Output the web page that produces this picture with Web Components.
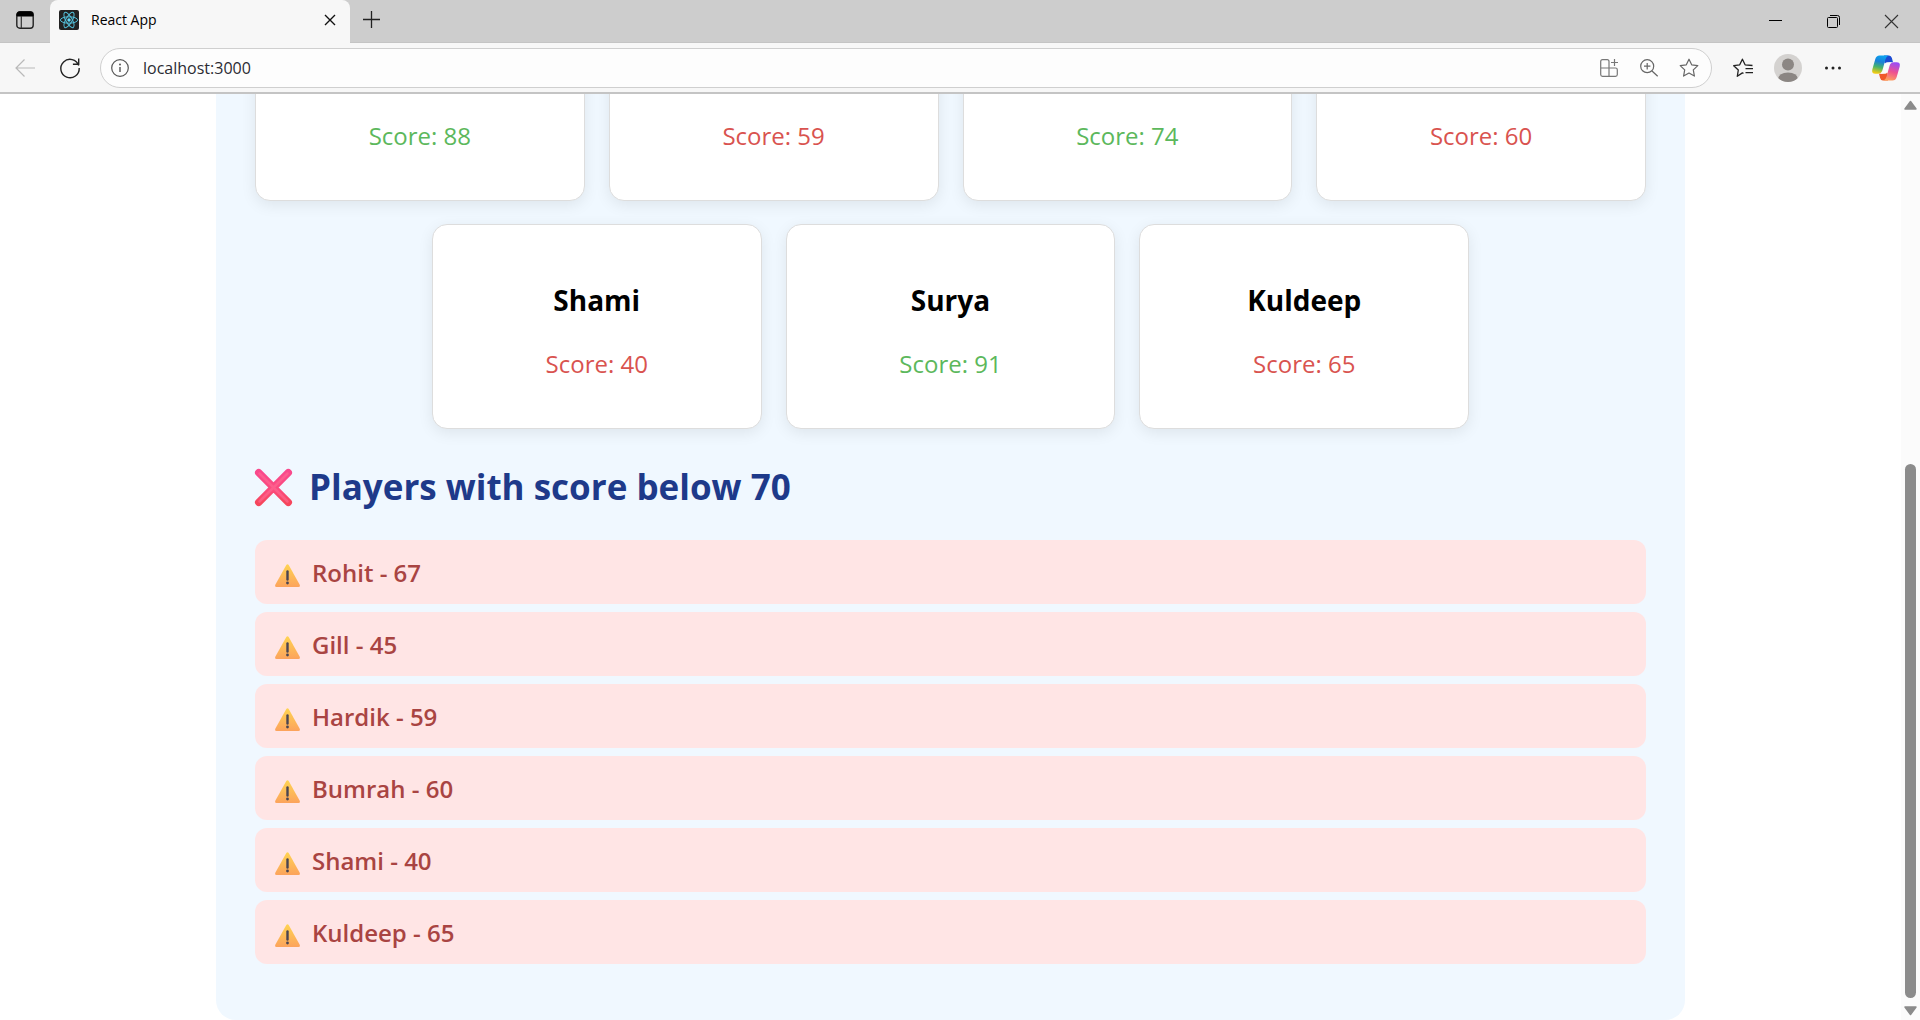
<!DOCTYPE html>
<html lang="en">
<head>
<meta charset="utf-8">
<title>React App</title>
<style>
  html, body { height: 100%; margin: 0; }
  body { overflow: hidden; background: #fff; font-family: "Open Sans", "Noto Sans", sans-serif; color: #000; }
</style>
</head>
<body>
<browser-window>
  <tab-strip slot="chrome" label="React App"></tab-strip>
  <nav-bar slot="chrome" address="localhost:3000"></nav-bar>
  <score-panel>
    <player-card score="88"></player-card>
    <player-card score="59"></player-card>
    <player-card score="74"></player-card>
    <player-card score="60"></player-card>
    <player-card score="40">Shami</player-card>
    <player-card score="91">Surya</player-card>
    <player-card score="65">Kuldeep</player-card>
    <section-title slot="below">Players with score below 70</section-title>
    <low-score slot="below">Rohit - 67</low-score>
    <low-score slot="below">Gill - 45</low-score>
    <low-score slot="below">Hardik - 59</low-score>
    <low-score slot="below">Bumrah - 60</low-score>
    <low-score slot="below">Shami - 40</low-score>
    <low-score slot="below">Kuldeep - 65</low-score>
  </score-panel>
  <scroll-track slot="scroll"></scroll-track>
</browser-window>

<script>
const base = `<style>
  *, *::before, *::after { box-sizing: border-box; }
  button { display: flex; align-items: center; justify-content: center; flex: none; margin: 0; padding: 0; border: 0; background: none; font: inherit; color: inherit; }
  svg { display: block; flex: none; overflow: visible; fill: none; }
</style>`;

function define(name, render) {
  customElements.define(name, class extends HTMLElement {
    constructor() { super(); this.attachShadow({ mode: "open" }); }
    connectedCallback() { this.shadowRoot.innerHTML = base + render(this); }
  });
}

define("browser-window", () => `<style>
  :host { display: flex; flex-direction: column; height: 100vh; }
  header { flex: none; border-bottom: 2px solid #c4c4c4; }
  .view { flex: 1; min-height: 0; display: flex; }
  main { flex: 1; min-width: 0; display: flex; flex-direction: column; justify-content: flex-end; align-items: center; overflow: hidden; }
</style>
<header><slot name="chrome"></slot></header>
<div class="view"><main><slot></slot></main><slot name="scroll"></slot></div>`);

define("tab-strip", el => `<style>
  :host { display: flex; height: 43px; background: #cdcdcd; box-shadow: inset 0 -1px #c4c4c4; }
  .menu { width: 50px; height: 40px; }
  .tab { display: flex; align-items: center; width: 300px; height: 43px; padding: 0 10px 3px 9px; background: #f7f7f7; border-radius: 8px 8px 0 0; }
  .name { flex: 1; padding-left: 12px; font-size: 14px; line-height: 20px; }
  .close { width: 20px; height: 20px; }
  .add { width: 43px; height: 39px; }
  .win { display: flex; margin-left: auto; }
  .win button { width: 58px; height: 42px; }
</style>
<button class="menu" aria-label="Tab actions"><svg width="18" height="18" viewBox="0 0 18 18"><rect x=".8" y=".8" width="16.4" height="16.4" rx="3" stroke="#222" stroke-width="1.4"/><path d="M1 5V3.5Q1 1 3.5 1h11Q17 1 17 3.5V5Z" fill="#000" stroke="#000"/><path d="M5.3 5v12" stroke="#333" stroke-width="1.2"/></svg></button>
<div class="tab">
  <svg width="20" height="20" viewBox="0 0 20 20"><rect width="20" height="20" rx="2" fill="#222"/><g stroke="#53bfd9" stroke-width="1"><ellipse cx="10" cy="10" rx="8.6" ry="3.2"/><ellipse cx="10" cy="10" rx="8.6" ry="3.2" transform="rotate(60 10 10)"/><ellipse cx="10" cy="10" rx="8.6" ry="3.2" transform="rotate(120 10 10)"/></g><circle cx="10" cy="10" r="1.7" fill="#61dafb"/></svg>
  <span class="name">${el.getAttribute("label")}</span>
  <button class="close" aria-label="Close tab"><svg width="10" height="10" viewBox="0 0 10 10"><path d="M0 0l10 10M10 0L0 10" stroke="#111" stroke-width="1.4"/></svg></button>
</div>
<button class="add" aria-label="New tab"><svg width="17" height="17" viewBox="0 0 17 17"><path d="M8.5 0v17M0 8.5h17" stroke="#222" stroke-width="1.3"/></svg></button>
<div class="win">
  <button aria-label="Minimize"><svg width="13" height="13" viewBox="0 0 13 13"><path d="M0 5.5h13" stroke="#000"/></svg></button>
  <button aria-label="Restore"><svg width="13" height="13" viewBox="0 0 13 13"><rect x=".5" y="2.5" width="10" height="10" rx="1" stroke="#000"/><path d="M3 .5h7.5q2 0 2 2V10" stroke="#000"/></svg></button>
  <button aria-label="Close window"><svg width="13" height="13" viewBox="0 0 13 13"><path d="M0 0l13 13M13 0L0 13" stroke="#333" stroke-width="1.1"/></svg></button>
</div>`);

const star = "M10 1.2l2.7 5.6 6.1.8-4.5 4.3 1.1 6.2-5.4-3-5.4 3 1.1-6.2L1.2 7.6l6.1-.8Z";

define("nav-bar", el => `<style>
  :host { display: flex; align-items: center; height: 49px; padding: 0 4px 0 2px; background: #f7f7f7; }
  .nav { width: 45px; height: 40px; }
  .box { flex: 1; min-width: 0; display: flex; align-items: center; height: 40px; margin: 0 8px; padding: 0 2px 0 10px; border: 1px solid #cfcfcf; border-radius: 20px; background: #fdfdfd; }
  .box button { width: 40px; height: 36px; }
  .box .info { width: 18px; }
  input { flex: 1; min-width: 0; margin: 0 0 0 14px; padding: 0; border: 0; outline: 0; background: none; font: 16px/24px "Open Sans", "Noto Sans", sans-serif; color: #2b2b33; }
  .pilot { width: 61px; height: 40px; }
</style>
<button class="nav" aria-label="Back"><svg width="20" height="18" viewBox="0 0 20 18"><path d="M20 9H1M9.5 .5L1 9l8.500 8.500" stroke="#b9b9b9" stroke-width="1.200"/></svg></button>
<button class="nav" aria-label="Refresh"><svg width="20" height="20" viewBox="0 0 20 20"><path d="M18.700 7.500A9.200 9.200 0 1 0 19.200 10M18.700 .5v5.800h-5.800" stroke="#222" stroke-width="1.400"/></svg></button>
<div class="box">
  <button class="info" aria-label="Site information"><svg width="18" height="18" viewBox="0 0 18 18"><circle cx="9" cy="9" r="8.300" stroke="#555" stroke-width="1.200"/><path d="M9 8v5" stroke="#444" stroke-width="1.300"/><circle cx="9" cy="5.500" r=".9" fill="#444"/></svg></button>
  <input type="text" aria-label="Address" value="${el.getAttribute("address")}">
  <button aria-label="Apps"><svg width="18" height="18" viewBox="0 0 18 18"><path d="M9 9V2.500Q9 .7 7.200 .7H2.500Q.7 .7 .7 2.500V15.500Q.7 17.300 2.500 17.300H15.500Q17.300 17.300 17.300 15.500V10.800Q17.300 9 15.500 9H.7M9 9v8.300M14.500 0v7M11 3.500h7" stroke="#777" stroke-width="1.200"/></svg></button>
  <button aria-label="Zoom"><svg width="18" height="18" viewBox="0 0 18 18"><circle cx="7.200" cy="7.200" r="6.500" stroke="#666" stroke-width="1.200"/><path d="M12 12l5.700 5.200M7.200 4v6.400M4 7.200h6.400" stroke="#666" stroke-width="1.200"/></svg></button>
  <button aria-label="Add to favorites"><svg width="20" height="20" viewBox="0 0 20 20"><path d="${star}" stroke="#666" stroke-width="1.200" stroke-linejoin="round"/></svg></button>
</div>
<button class="nav" aria-label="Favorites"><svg width="20" height="20" viewBox="0 0 20 20"><path d="M10.500 15.300L9.400 14.900 4.300 18.300 5.300 12 .7 7.700l6-.9L9.400 1.200l2.700 5.600 7.400.7M12.500 10.600h7.500M12.500 14.700h7.500" stroke="#222" stroke-width="1.300" stroke-linejoin="round"/></svg></button>
<button class="nav" aria-label="Profile"><svg width="28" height="28" viewBox="0 0 28 28"><defs><clipPath id="disc"><circle cx="14" cy="14" r="14"/></clipPath></defs><circle cx="14" cy="14" r="14" fill="#d4d2d0"/><g fill="#8b8683" clip-path="url(#disc)"><circle cx="14" cy="10.500" r="6"/><path d="M4 25q1-6.500 10-6.500T24 25l-4 3H8Z"/></g></svg></button>
<button class="nav" aria-label="Settings and more"><svg width="16" height="4" viewBox="0 0 16 4"><g fill="#222"><circle cx="1.500" cy="2" r="1.500"/><circle cx="8" cy="2" r="1.500"/><circle cx="14.500" cy="2" r="1.500"/></g></svg></button>
<button class="pilot" aria-label="Copilot"><svg width="28" height="26" viewBox="0 0 28 26">
  <defs>
    <linearGradient id="a" x1=".6" y1="0" x2=".4" y2="1"><stop offset="0" stop-color="#0aa5f0"/><stop offset=".35" stop-color="#1b80d8"/><stop offset=".65" stop-color="#45b36b"/><stop offset="1" stop-color="#f4cc12"/></linearGradient>
    <linearGradient id="b" x1=".6" y1="0" x2=".3" y2="1"><stop offset="0" stop-color="#9b4df5"/><stop offset=".5" stop-color="#ee5191"/><stop offset="1" stop-color="#ffa45c"/></linearGradient>
  </defs>
  <path d="M12 .5h5q2.200 0 2.900 2.500L21 7.300h-2.500q-2.500 0-3.500 1.700l-2.500-1Z" fill="#1c4bd2"/>
  <path d="M16 25.500h-5q-2.200 0-2.900-2.500L7 18.700h2.500q2.500 0 3.500-1.700l2.500 1Z" fill="#f0592b"/>
  <path d="M7.500 .5H16.500q-2.300 1-3.100 4L10.500 15q-1 3.700-4.500 3.700H3.500Q-.7 18.700.3 14.500L3.300 4Q4.300.5 7.500.5Z" fill="url(#a)"/>
  <path d="M20.500 25.500H11.500q2.300-1 3.100-4L17.500 11q1-3.700 4.500-3.700h2.500q4.200 0 3.200 4.200l-3 10.500q-1 3.500-4.200 3.500Z" fill="url(#b)"/>
  <path d="M13 8.800q.4-1.500 2-1.500h4.500q-2 .8-2.700 3.200L15 17.200q-.4 1.500-2 1.500H8.500q2-.8 2.700-3.200Z" fill="#fbfbfb"/>
</svg></button>`);

define("scroll-track", () => `<style>
  :host { flex: none; display: flex; flex-direction: column; align-items: center; width: 19px; padding: 6px 0 4px; background: #fbfbfb; }
  .rail { flex: 1; display: flex; flex-direction: column; width: 11px; padding-bottom: 8px; }
  .before { flex: 354; }
  .thumb { flex: 534; border-radius: 6px; background: #8b8b8b; }
</style>
<svg width="13" height="10" viewBox="0 0 13 10"><path d="M6.500 1.500L12 9H1Z" fill="#8b8b8b" stroke="#8b8b8b" stroke-width="1.500" stroke-linejoin="round"/></svg>
<div class="rail"><div class="before"></div><div class="thumb"></div></div>
<svg width="13" height="10" viewBox="0 0 13 10"><path d="M6.500 8.500L12 1H1Z" fill="#8b8b8b" stroke="#8b8b8b" stroke-width="1.500" stroke-linejoin="round"/></svg>`);

define("score-panel", () => `<style>
  :host { display: block; box-sizing: border-box; flex: none; width: calc(100% - 432px); padding: 39px 39px 56px; border-radius: 20px; background: #f0f8ff; }
  .cards { display: flex; flex-wrap: wrap; justify-content: center; gap: 23px 24px; }
  .below { display: flex; flex-direction: column; gap: 8px; }
</style>
<div class="cards"><slot></slot></div>
<div class="below"><slot name="below"></slot></div>`);

define("player-card", el => {
  const score = Number(el.getAttribute("score"));
  return `<style>
  :host { box-sizing: border-box; display: flex; flex-direction: column; justify-content: flex-end; flex: none; width: calc((100% - 72px) / 4); min-height: 205px; padding: 48px 24px; border: 1px solid #ddd; border-radius: 15px; background: #fff; box-shadow: 0 4px 15px rgba(0, 0, 0, .08); text-align: center; }
  h3 { margin: 0 0 30px; font-size: 28px; line-height: 36px; font-weight: 700; }
  p { margin: 0; font-size: 24px; line-height: 32px; color: ${score > 70 ? "#5cb85c" : "#d9534f"}; }
</style>
${el.textContent ? "<h3><slot></slot></h3>" : ""}<p>Score: ${score}</p>`;
});

define("section-title", () => `<style>
  :host { display: block; padding: 34px 0 21px; }
  h2 { display: flex; align-items: center; gap: 17px; margin: 0; font-size: 35px; line-height: 48px; font-weight: 700; color: #1e3a8a; }
</style>
<h2><svg width="37" height="37" viewBox="0 0 37 37"><defs><linearGradient id="x" x1="0" y1="0" x2="0" y2="1"><stop offset="0" stop-color="#f9498c"/><stop offset=".6" stop-color="#fb4a7c"/><stop offset="1" stop-color="#f6465c"/></linearGradient></defs><path d="M3.700 3.700l29.600 29.600M33.300 3.700L3.700 33.300" stroke="url(#x)" stroke-width="7.400" stroke-linecap="round"/><path d="M4.500 4.500l28 28M32.500 4.500l-28 28" stroke="#ff6a95" stroke-width="2.500" stroke-linecap="round" opacity=".6"/></svg><slot></slot></h2>`);

define("low-score", () => `<style>
  :host { display: flex; align-items: center; gap: 12px; padding: 17px 20px 15px; border-radius: 12px; background: #ffe5e5; font-size: 24px; line-height: 32px; font-weight: 600; color: #a94442; }
  svg { margin-top: 4px; }
</style>
<svg width="25" height="23" viewBox="0 0 25 23"><defs><linearGradient id="w" x1="0" y1="0" x2="0" y2="1"><stop offset="0" stop-color="#ffd452"/><stop offset="1" stop-color="#fca35c"/></linearGradient></defs><path d="M11.300 1Q12.500-.7 13.700 1L24.700 20.800Q25.500 23 23.500 23H1.500Q-.5 23 .3 20.800Z" fill="url(#w)"/><path d="M12.500 7.500v8" stroke="#4a4552" stroke-width="2.400" stroke-linecap="round"/><circle cx="12.500" cy="19" r="1.400" fill="#4a4552"/></svg><slot></slot>`);
</script>
</body>
</html>
